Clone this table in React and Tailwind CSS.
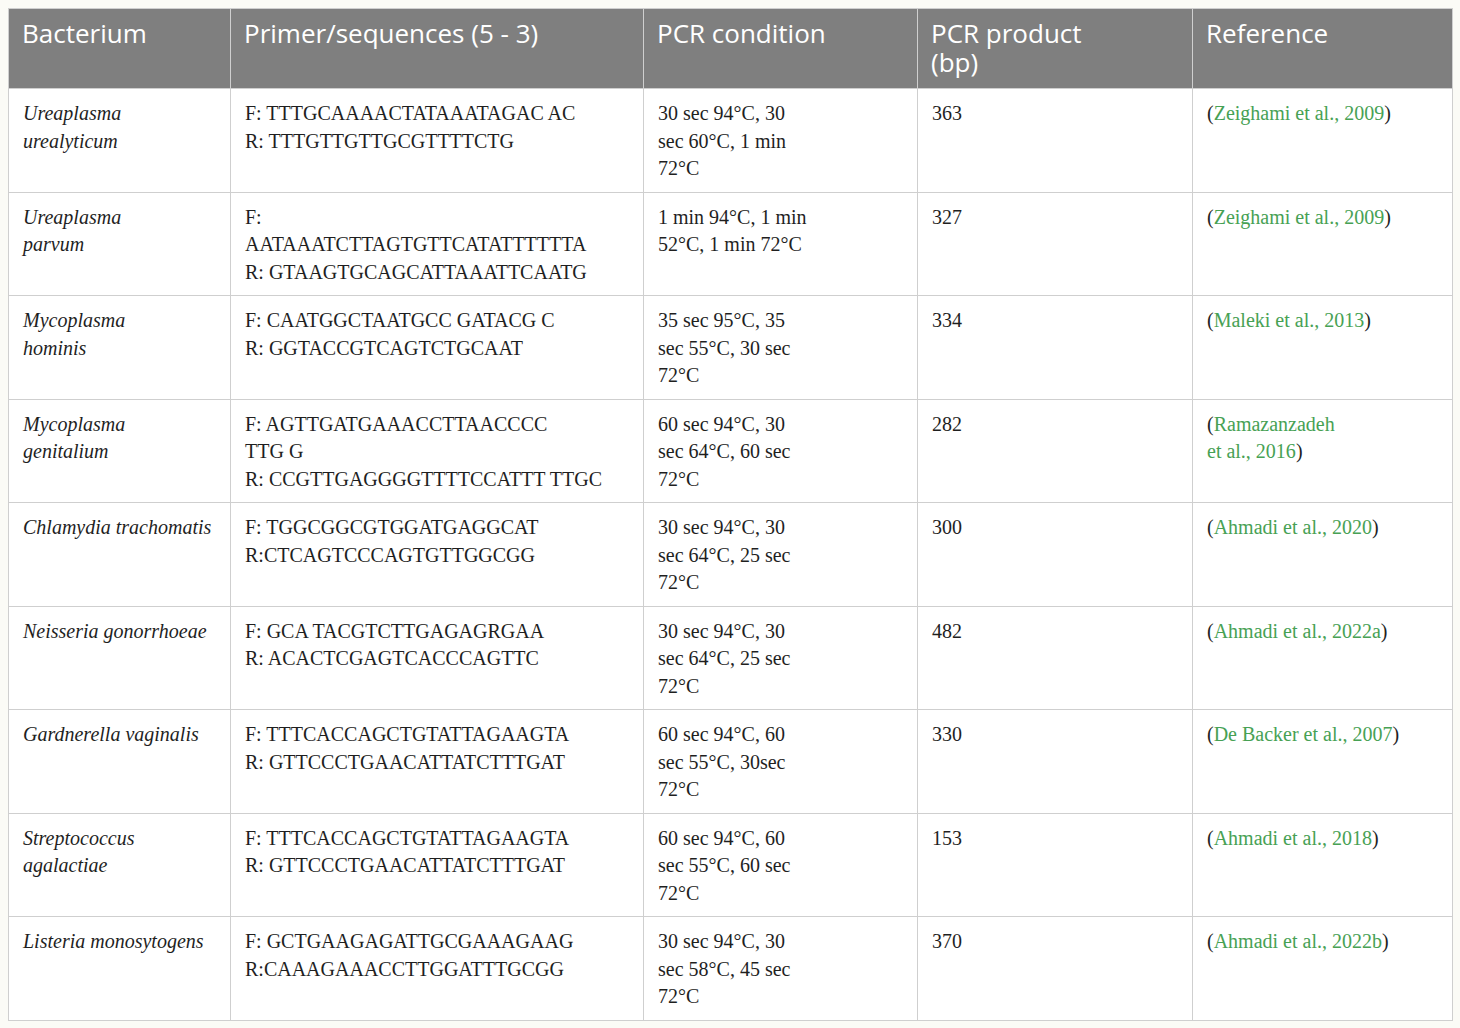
const rows = [
  {
    name: ["Ureaplasma", "urealyticum"],
    primer: ["F: TTTGCAAAACTATAAATAGAC AC", "R: TTTGTTGTTGCGTTTTCTG"],
    cond: ["30 sec 94°C, 30", "sec 60°C, 1 min", "72°C"],
    size: "363",
    ref: ["Zeighami et al., 2009"],
  },
  {
    name: ["Ureaplasma", "parvum"],
    primer: ["F:", "AATAAATCTTAGTGTTCATATTTTTTA", "R: GTAAGTGCAGCATTAAATTCAATG"],
    cond: ["1 min 94°C, 1 min", "52°C, 1 min 72°C"],
    size: "327",
    ref: ["Zeighami et al., 2009"],
  },
  {
    name: ["Mycoplasma", "hominis"],
    primer: ["F: CAATGGCTAATGCC GATACG C", "R: GGTACCGTCAGTCTGCAAT"],
    cond: ["35 sec 95°C, 35", "sec 55°C, 30 sec", "72°C"],
    size: "334",
    ref: ["Maleki et al., 2013"],
  },
  {
    name: ["Mycoplasma", "genitalium"],
    primer: ["F: AGTTGATGAAACCTTAACCCC", "TTG G", "R: CCGTTGAGGGGTTTTCCATTT TTGC"],
    cond: ["60 sec 94°C, 30", "sec 64°C, 60 sec", "72°C"],
    size: "282",
    ref: ["Ramazanzadeh", "et al., 2016"],
  },
  {
    name: ["Chlamydia trachomatis"],
    primer: ["F: TGGCGGCGTGGATGAGGCAT", "R:CTCAGTCCCAGTGTTGGCGG"],
    cond: ["30 sec 94°C, 30", "sec 64°C, 25 sec", "72°C"],
    size: "300",
    ref: ["Ahmadi et al., 2020"],
  },
  {
    name: ["Neisseria gonorrhoeae"],
    primer: ["F: GCA TACGTCTTGAGAGRGAA", "R: ACACTCGAGTCACCCAGTTC"],
    cond: ["30 sec 94°C, 30", "sec 64°C, 25 sec", "72°C"],
    size: "482",
    ref: ["Ahmadi et al., 2022a"],
  },
  {
    name: ["Gardnerella vaginalis"],
    primer: ["F: TTTCACCAGCTGTATTAGAAGTA", "R: GTTCCCTGAACATTATCTTTGAT"],
    cond: ["60 sec 94°C, 60", "sec 55°C, 30sec", "72°C"],
    size: "330",
    ref: ["De Backer et al., 2007"],
  },
  {
    name: ["Streptococcus", "agalactiae"],
    primer: ["F: TTTCACCAGCTGTATTAGAAGTA", "R: GTTCCCTGAACATTATCTTTGAT"],
    cond: ["60 sec 94°C, 60", "sec 55°C, 60 sec", "72°C"],
    size: "153",
    ref: ["Ahmadi et al., 2018"],
  },
  {
    name: ["Listeria monosytogens"],
    primer: ["F: GCTGAAGAGATTGCGAAAGAAG", "R:CAAAGAAACCTTGGATTTGCGG"],
    cond: ["30 sec 94°C, 30", "sec 58°C, 45 sec", "72°C"],
    size: "370",
    ref: ["Ahmadi et al., 2022b"],
  },
];

function Lines({ items }) {
  return items.map((line, i) => <div key={i}>{line}</div>);
}

function Ref({ parts }) {
  // citation text in green, brackets stay dark
  if (parts.length === 1) {
    return (
      <div>
        (<span className="text-[#47a154]">{parts[0]}</span>)
      </div>
    );
  }
  return (
    <>
      <div>
        (<span className="text-[#47a154]">{parts[0]}</span>
      </div>
      <div>
        <span className="text-[#47a154]">{parts[1]}</span>)
      </div>
    </>
  );
}

export default function App() {
  const th =
    "border border-[#cfcfcf] px-[13px] pt-[10px] align-top text-left font-normal";
  const td =
    "border border-[#cfcfcf] pl-[14px] pr-2 pt-[11px] pb-[9px] align-top";

  return (
    <div className="min-h-[1028px] bg-[#fbfbf6] p-[8px]">
      <table className="w-[1444px] table-fixed border-collapse bg-white">
        <colgroup>
          <col className="w-[222px]" />
          <col className="w-[413px]" />
          <col className="w-[274px]" />
          <col className="w-[275px]" />
          <col className="w-[260px]" />
        </colgroup>
        <thead>
          <tr className="h-[80px] bg-[#7f7f7f] text-[26px] leading-[29px] text-white [font-family:'Open_Sans',sans-serif]">
            <th className={th}>Bacterium</th>
            <th className={th}>Primer/sequences (5 - 3)</th>
            <th className={th}>PCR condition</th>
            <th className={th}>
              <div>PCR product</div>
              <div>(bp)</div>
            </th>
            <th className={th}>Reference</th>
          </tr>
        </thead>
        <tbody className="text-[20px] leading-[27.5px] text-[#1f1f1f] [font-family:'Liberation_Serif',serif]">
          {rows.map((r) => (
            <tr key={r.name.join(" ")} className="h-[103.5px]">
              <td className={td + " italic"}>
                <Lines items={r.name} />
              </td>
              <td className={td}>
                <Lines items={r.primer} />
              </td>
              <td className={td}>
                <Lines items={r.cond} />
              </td>
              <td className={td}>{r.size}</td>
              <td className={td}>
                <Ref parts={r.ref} />
              </td>
            </tr>
          ))}
        </tbody>
      </table>
    </div>
  );
}
